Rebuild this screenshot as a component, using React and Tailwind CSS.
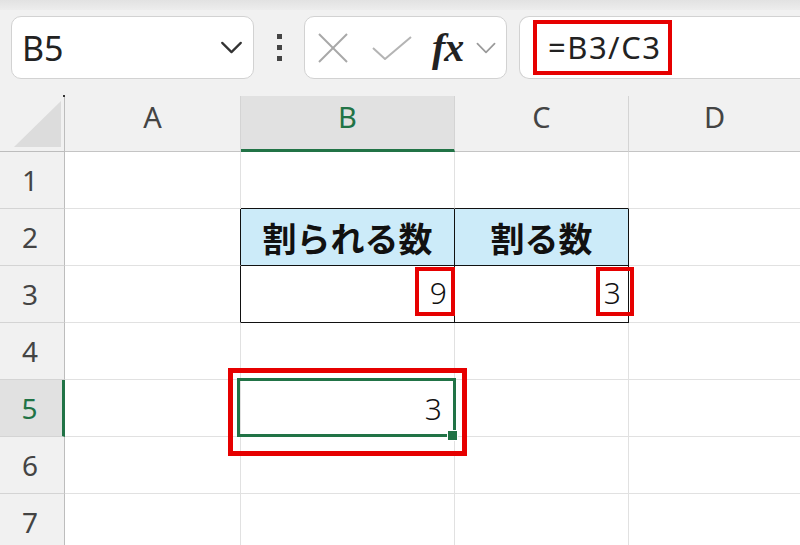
import React from "react";

const ROWS = [1, 2, 3, 4, 5, 6, 7];

function Chevron({ className, color = "#333", width = 2.4 }) {
  return (
    <svg viewBox="0 0 24 14" className={className} fill="none">
      <polyline points="2,2 12,12 22,2" stroke={color} strokeWidth={width} strokeLinecap="round" strokeLinejoin="round" />
    </svg>
  );
}

function Toolbar() {
  return (
    <div className="h-[96px] bg-[#f1f1f1] flex flex-col">
      <div className="h-[10px] bg-gradient-to-b from-[#e2e2e2] to-[#ededed]" />
      <div className="flex items-start pt-[6px] pl-[11px] gap-0">
        {/* 名前ボックス */}
        <div className="w-[243px] h-[63px] rounded-[10px] border border-[#d2d2d2] bg-white flex items-center pl-[10px] pr-[10px]">
          <span className="text-[34px] text-[#222] leading-none">B5</span>
          <Chevron className="ml-auto w-[23px] h-[13px]" color="#333" width={2.4} />
        </div>

        {/* 区切り */}
        <div className="w-[50px] h-[63px] flex flex-col items-center justify-center gap-[6px]">
          <span className="w-[5px] h-[5px] bg-[#444]" />
          <span className="w-[5px] h-[5px] bg-[#444]" />
          <span className="w-[5px] h-[5px] bg-[#444]" />
        </div>

        {/* 確定ボタン類 */}
        <div className="w-[203px] h-[63px] rounded-[10px] border border-[#d2d2d2] bg-white flex items-center pl-[13px]">
          <svg viewBox="0 0 30 30" className="w-[30px] h-[30px]" fill="none">
            <line x1="1" y1="1" x2="29" y2="29" stroke="#a8a8a8" strokeWidth="2" />
            <line x1="29" y1="1" x2="1" y2="29" stroke="#a8a8a8" strokeWidth="2" />
          </svg>
          <svg viewBox="0 0 40 24" className="ml-[24px] w-[40px] h-[24px]" fill="none">
            <polyline points="1,12 13,23 39,1" stroke="#b4b4b4" strokeWidth="2" />
          </svg>
          <span className="ml-[20px] text-[40px] italic font-bold text-[#222] leading-none tracking-[-1px] [font-family:'Liberation_Serif',serif]">
            fx
          </span>
          <Chevron className="ml-[12px] w-[22px] h-[12px]" color="#9a9a9a" width={2} />
        </div>

        {/* 数式バー */}
        <div className="ml-[12px] flex-1 h-[63px] rounded-l-[10px] border border-r-0 border-[#d2d2d2] bg-white flex items-center pl-[13px]">
          <span className="h-[55px] border-[4px] border-[#e60000] flex items-center pl-[11px] pr-[7px] text-[31px] tracking-[1.5px] text-[#222] leading-none">
            =B3/C3
          </span>
        </div>
      </div>
    </div>
  );
}

function ColumnHeader() {
  return (
    <div className="flex h-[56px] bg-[#f1f1f1]">
      <div className="w-[65px] h-full border-r border-b border-[#bdbdbd] flex items-end justify-end pr-[3px] pb-[4px] relative">
        <span className="absolute -top-[1px] right-[-1px] w-[2px] h-[2px] bg-[#333]" />
        <svg viewBox="0 0 47 46" className="w-[47px] h-[46px]">
          <polygon points="47,0 47,46 0,46" fill="#dcdcdc" />
        </svg>
      </div>
      <div className="w-[176px] h-full border-r border-b border-[#d4d4d4] border-b-[#c4c4c4] flex items-center justify-center pb-[14px] text-[29px] text-[#444]">
        A
      </div>
      <div className="w-[214px] h-full bg-[#e1e1e1] border-r border-[#d4d4d4] border-b-[3px] border-b-[#217346] flex items-center justify-center pb-[12px] text-[29px] text-[#217346]">
        B
      </div>
      <div className="w-[174px] h-full border-r border-b border-[#d4d4d4] border-b-[#c4c4c4] flex items-center justify-center pb-[14px] text-[29px] text-[#444]">
        C
      </div>
      <div className="flex-1 h-full border-b border-[#c4c4c4] flex items-center justify-start pl-[75px] pb-[14px] text-[29px] text-[#444]">
        D
      </div>
    </div>
  );
}

function RowHeader({ n }) {
  if (n === 5) {
    return (
      <div className="w-[65px] h-full bg-[#e1e1e1] border-r-[3px] border-r-[#217346] border-b border-b-[#d4d4d4] flex items-center justify-center pr-[3px] text-[28px] text-[#217346]">
        {n}
      </div>
    );
  }
  return (
    <div className="w-[65px] h-full bg-[#f1f1f1] border-r border-r-[#bdbdbd] border-b border-b-[#d4d4d4] flex items-center justify-center pr-[4px] text-[28px] text-[#444]">
      {n}
    </div>
  );
}

function Row({ n }) {
  const g = "border-[#e1e1e1]";
  return (
    <div className="flex h-[57px]">
      <RowHeader n={n} />

      {/* A */}
      <div
        className={
          n === 2 || n === 3
            ? "w-[176px] h-full border-b border-b-[#e1e1e1] border-r border-r-[#111]"
            : `w-[176px] h-full border-r border-b ${g}`
        }
      />

      {/* B */}
      {n === 1 && <div className="w-[214px] h-full border-r border-r-[#e1e1e1] border-b border-b-[#111]" />}
      {n === 2 && (
        <div className="w-[214px] h-full bg-[#ccebf9] border-r border-b border-[#111] flex items-center justify-center font-bold text-[34px] text-[#111] [font-family:'Noto_Sans_CJK_JP',sans-serif]">
          割られる数
        </div>
      )}
      {n === 3 && (
        <div className="relative w-[214px] h-full border-r border-b border-[#111] flex items-center justify-end pr-[7px] pb-[4px] text-[30px] font-light text-[#111]">
          9
          <span className="absolute right-[-1px] top-[1px] w-[40px] h-[49px] border-[4px] border-[#e60000] z-10" />
        </div>
      )}
      {n === 5 && (
        <div className="relative w-[214px] h-full border-r border-b border-[#e1e1e1] flex items-center justify-end pr-[12px] text-[30px] font-light text-[#111]">
          3
          <span className="absolute -left-[4px] -right-[2px] -top-[2px] -bottom-[1px] border-[3px] border-[#217346] z-10" />
          <span className="absolute -right-[4px] -bottom-[5px] w-[11px] h-[11px] bg-[#217346] border border-white z-20" />
          <span className="absolute -left-[13px] -right-[13px] -top-[12px] -bottom-[20px] border-[5px] border-[#e60000] z-10" />
        </div>
      )}
      {(n === 4 || n === 6 || n === 7) && <div className={`w-[214px] h-full border-r border-b ${g}`} />}

      {/* C */}
      {n === 1 && <div className="w-[174px] h-full border-r border-r-[#e1e1e1] border-b border-b-[#111]" />}
      {n === 2 && (
        <div className="w-[174px] h-full bg-[#ccebf9] border-r border-b border-[#111] flex items-center justify-center font-bold text-[34px] text-[#111] [font-family:'Noto_Sans_CJK_JP',sans-serif]">
          割る数
        </div>
      )}
      {n === 3 && (
        <div className="relative w-[174px] h-full border-r border-b border-[#111] flex items-center justify-end pr-[7px] pb-[4px] text-[30px] font-light text-[#111]">
          3
          <span className="absolute right-[-6px] top-[1px] w-[38px] h-[49px] border-[4px] border-[#e60000] z-10" />
        </div>
      )}
      {n > 3 && <div className={`w-[174px] h-full border-r border-b ${g}`} />}

      {/* D */}
      <div className={`flex-1 h-full border-b ${g}`} />
    </div>
  );
}

export default function App() {
  return (
    <div className="w-[800px] h-[545px] overflow-hidden bg-white [font-family:'Noto_Sans','Noto_Sans_CJK_JP',sans-serif]">
      <Toolbar />
      <ColumnHeader />
      {ROWS.map((n) => (
        <Row key={n} n={n} />
      ))}
    </div>
  );
}
